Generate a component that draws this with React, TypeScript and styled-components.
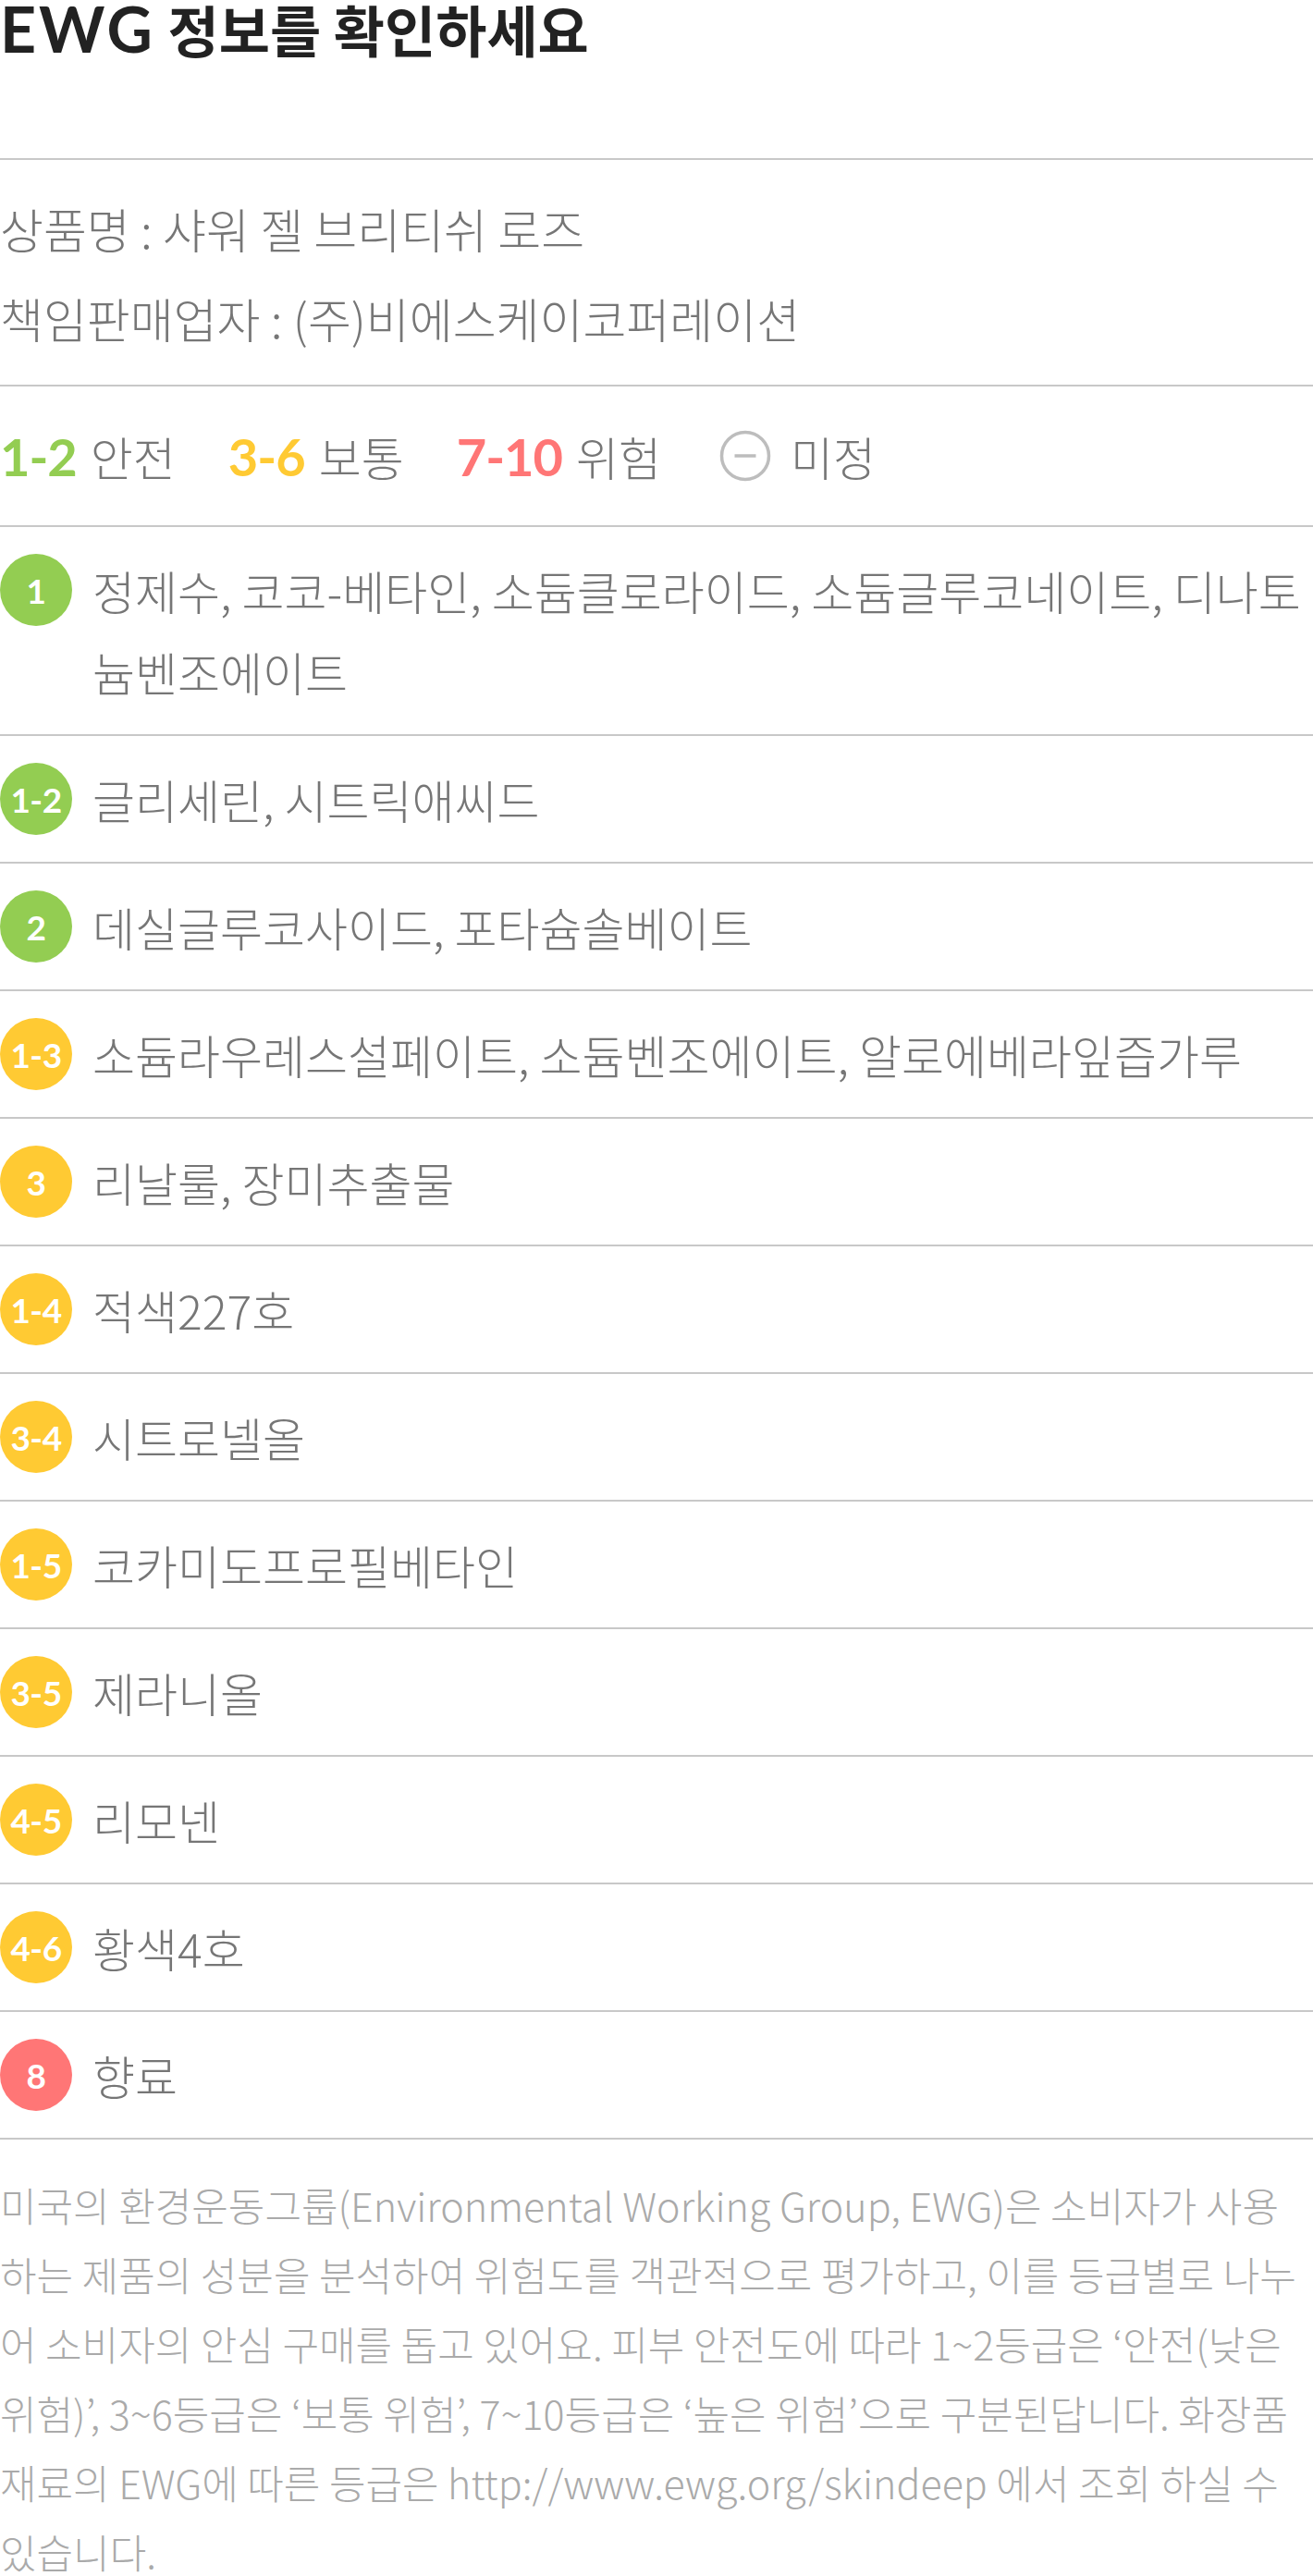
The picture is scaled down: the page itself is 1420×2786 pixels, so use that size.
import React from "react";
import styled, { createGlobalStyle } from "styled-components";

const safeColor = "#93cd52";
const midColor = "#ffca33";
const highColor = "#ff7676";
const lineColor = "#c8c8c8";
const bodyText = "#767676";
const noteText = "#aaaaaa";

type Level = "safe" | "mid" | "high";

const levelColor: Record<Level, string> = {
  safe: safeColor,
  mid: midColor,
  high: highColor,
};

const GlobalStyle = createGlobalStyle`
  body {
    margin: 0;
    background: #fff;
    font-family: "Noto Sans CJK KR", "Noto Sans", sans-serif;
  }
`;

const Wrapper = styled.div`
  width: 1420px;
  background: #fff;
`;

// Heading block
const Header = styled.div`
  height: 171px;
  border-bottom: 2px solid ${lineColor};
`;

const Title = styled.h2`
  margin: 0;
  font-size: 60px;
  line-height: 62px;
  font-weight: 700;
  color: #222;
`;

const Latin = styled.span`
  font-family: "Lato", sans-serif;
  font-size: 68px;
  letter-spacing: 3px;
`;

// Product info
const InfoSection = styled.div`
  padding: 26px 0 23px;
  border-bottom: 2px solid ${lineColor};
`;

const InfoLine = styled.p`
  margin: 0;
  font-size: 51px;
  line-height: 97px;
  font-weight: 300;
  color: ${bodyText};
`;

// Legend
const Legend = styled.div`
  display: flex;
  align-items: center;
  gap: 57px;
  height: 150px;
  border-bottom: 2px solid ${lineColor};
`;

const LegendItem = styled.div`
  display: flex;
  align-items: center;
  gap: 15px;
`;

const LegendRange = styled.span<{ $level: Level }>`
  font-family: "Lato", sans-serif;
  font-size: 56px;
  font-weight: 700;
  letter-spacing: -1px;
  color: ${(p) => levelColor[p.$level]};
`;

const LegendLabel = styled.span`
  font-size: 50px;
  font-weight: 300;
  color: ${bodyText};
`;

const UnknownIcon = styled.svg`
  width: 56px;
  height: 56px;
  margin: 0 6px 0 6px;
`;

// Ingredient rows
const Row = styled.div`
  display: flex;
  align-items: flex-start;
  padding: 24px 0;
  border-bottom: 2px solid ${lineColor};
`;

const Badge = styled.div<{ $level: Level }>`
  flex: 0 0 78px;
  height: 78px;
  margin: 5px 22px 0 0;
  border-radius: 50%;
  background: ${(p) => levelColor[p.$level]};
  color: #fff;
  display: flex;
  align-items: center;
  justify-content: center;
  font-family: "Lato", sans-serif;
  font-size: 37px;
  font-weight: 700;
  letter-spacing: -0.5px;
`;

const RowText = styled.div`
  flex: 1;
  font-size: 50px;
  line-height: 88px;
  font-weight: 300;
  color: ${bodyText};
`;

// Footnote
const Note = styled.p`
  margin: 0;
  padding: 33px 0 0;
  font-size: 43px;
  line-height: 75px;
  font-weight: 300;
  color: ${noteText};
`;

const ingredients: { grade: string; level: Level; name: string }[] = [
  {
    grade: "1",
    level: "safe",
    name: "정제수, 코코-베타인, 소듐클로라이드, 소듐글루코네이트, 디나토늄벤조에이트",
  },
  { grade: "1-2", level: "safe", name: "글리세린, 시트릭애씨드" },
  { grade: "2", level: "safe", name: "데실글루코사이드, 포타슘솔베이트" },
  {
    grade: "1-3",
    level: "mid",
    name: "소듐라우레스설페이트, 소듐벤조에이트, 알로에베라잎즙가루",
  },
  { grade: "3", level: "mid", name: "리날룰, 장미추출물" },
  { grade: "1-4", level: "mid", name: "적색227호" },
  { grade: "3-4", level: "mid", name: "시트로넬올" },
  { grade: "1-5", level: "mid", name: "코카미도프로필베타인" },
  { grade: "3-5", level: "mid", name: "제라니올" },
  { grade: "4-5", level: "mid", name: "리모넨" },
  { grade: "4-6", level: "mid", name: "황색4호" },
  { grade: "8", level: "high", name: "향료" },
];

const App: React.FC = () => {
  return (
    <Wrapper>
      <GlobalStyle />
      <Header>
        <Title>
          <Latin>EWG</Latin> 정보를 확인하세요
        </Title>
      </Header>

      <InfoSection>
        <InfoLine>상품명 : 샤워 젤 브리티쉬 로즈</InfoLine>
        <InfoLine>책임판매업자 : (주)비에스케이코퍼레이션</InfoLine>
      </InfoSection>

      <Legend>
        <LegendItem>
          <LegendRange $level="safe">1-2</LegendRange>
          <LegendLabel>안전</LegendLabel>
        </LegendItem>
        <LegendItem>
          <LegendRange $level="mid">3-6</LegendRange>
          <LegendLabel>보통</LegendLabel>
        </LegendItem>
        <LegendItem>
          <LegendRange $level="high">7-10</LegendRange>
          <LegendLabel>위험</LegendLabel>
        </LegendItem>
        <LegendItem>
          <UnknownIcon viewBox="0 0 56 56">
            <circle cx="28" cy="28" r="25.5" fill="none" stroke="#bdbdbd" strokeWidth="3.5" />
            <line x1="16.5" y1="28" x2="39.5" y2="28" stroke="#bdbdbd" strokeWidth="3.5" />
          </UnknownIcon>
          <LegendLabel>미정</LegendLabel>
        </LegendItem>
      </Legend>

      {ingredients.map((item) => (
        <Row key={item.grade + item.name}>
          <Badge $level={item.level}>{item.grade}</Badge>
          <RowText>{item.name}</RowText>
        </Row>
      ))}

      <Note>
        미국의 환경운동그룹(Environmental Working Group, EWG)은 소비자가 사용하는
        제품의 성분을 분석하여 위험도를 객관적으로 평가하고, 이를 등급별로 나누어
        소비자의 안심 구매를 돕고 있어요. 피부 안전도에 따라 1~2등급은 ‘안전(낮은
        위험)’, 3~6등급은 ‘보통 위험’, 7~10등급은 ‘높은 위험’으로 구분된답니다.
        화장품 재료의 EWG에 따른 등급은 http://www.ewg.org/skindeep 에서 조회 하실
        수 있습니다.
      </Note>
    </Wrapper>
  );
};

export default App;
